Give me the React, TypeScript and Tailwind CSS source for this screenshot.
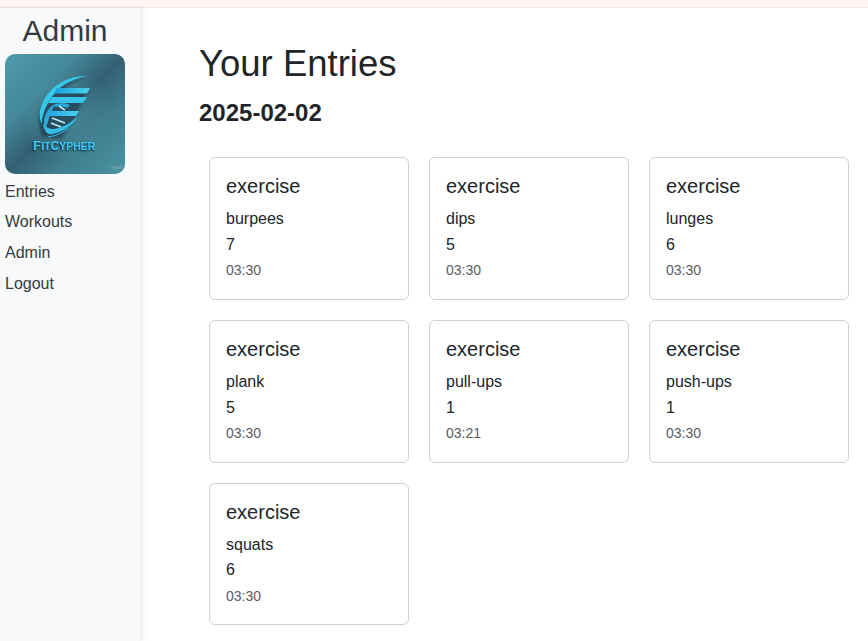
const entries = [
  { name: "burpees", n: 7, t: "03:30" },
  { name: "dips", n: 5, t: "03:30" },
  { name: "lunges", n: 6, t: "03:30" },
  { name: "plank", n: 5, t: "03:30" },
  { name: "pull-ups", n: 1, t: "03:21" },
  { name: "push-ups", n: 1, t: "03:30" },
  { name: "squats", n: 6, t: "03:30" },
];

function Logo() {
  return (
    <div className="relative w-[120px] h-[120px] rounded-[10px] overflow-hidden bg-[linear-gradient(135deg,#4f9ba9_0%,#44889a_30%,#335f73_50%,#3f7d8e_70%,#4a94a3_100%)]">
      <svg viewBox="0 0 120 120" className="absolute inset-0 w-full h-full">
        <defs>
          <filter id="sh" x="-20%" y="-20%" width="140%" height="140%">
            <feGaussianBlur stdDeviation="1.8" />
          </filter>
          <filter id="soft" x="-5%" y="-5%" width="110%" height="110%">
            <feGaussianBlur stdDeviation="0.35" />
          </filter>
          <radialGradient id="glow" cx="50%" cy="50%" r="50%">
            <stop offset="0%" stopColor="#4c93a3" stopOpacity="0.7" />
            <stop offset="100%" stopColor="#4c93a3" stopOpacity="0" />
          </radialGradient>
          <linearGradient id="bar" x1="0" y1="0" x2="1" y2="0">
            <stop offset="0%" stopColor="#1f9ee0" />
            <stop offset="100%" stopColor="#46d3ee" />
          </linearGradient>
        </defs>
        <circle cx="60" cy="60" r="48" fill="url(#glow)" />
        <g filter="url(#sh)" fill="#12283a" opacity="0.55" transform="translate(-2 2)">
          <path d="M82 22 C60 22 40 38 36 58 C35 68 37 76 40 81 L58 83 L72 63 L82 39 L85 34 L60 34 C66 28 74 24 82 22Z" />
        </g>
        <g filter="url(#soft)">
          <path d="M82 22 C60 21 39 36 35 57 C34 62 35 66 36.5 70 C37.5 57 44 43 56 33 C63 28 72 24 82 22Z" fill="#38c8e8" />
          <path d="M52 34 L85 34 L82 39.5 L49 39.5Z" fill="url(#bar)" />
          <path d="M47 43 L82 43 L78 49 L43 49Z" fill="#38c4ea" />
          <path d="M44 57 L74 57 L71 62 L40 62Z" fill="url(#bar)" />
          <path d="M39 75 C38 63 42 54 50 50 C47 56 44 62 43 68 C42 71 41 73 39 75Z" fill="#2aa9da" />
          <path d="M38 70 C40 78 42 81 47 80 C58 78 68 72 73 62 C67 68 58 74 48 75 C44 75 41 73 38 70Z" fill="#35bce4" />
          <path d="M50 50 C56 49 61 49 65 51 L62 54 C58 52 54 52 49 53Z" fill="#2aa9da" />
          <path d="M47 64 L60 69 M46 69 L56 73 M54 52 L60 56" stroke="#b6ebf3" strokeWidth="1.6" />
          <path d="M43 83 C50 82 58 79 64 74" fill="none" stroke="#35bce4" strokeWidth="1" />
        </g>
        <rect x="106" y="112" width="11" height="3" fill="#9bb8c2" opacity="0.3" />
      </svg>
      <div className="absolute left-[28px] top-[85px] whitespace-nowrap font-['Liberation_Sans',sans-serif] font-bold text-[10.5px] leading-[14px] text-[#3cc9ee] [text-shadow:-1px_1px_2px_#0c2030]">
        <span className="text-[13.5px]">F</span>IT<span className="text-[12px]">C</span>YPHER
      </div>
    </div>
  );
}

function Card({ name, n, t }: { name: string; n: number; t: string }) {
  return (
    <div className="h-[142.8px] border border-[#d0d0d0] rounded-[6px] bg-white pl-4 pt-4 flex flex-col">
      <div className="text-[20px] leading-6 text-[#212529]">exercise</div>
      <div className="text-[16px] leading-6 text-[#212529] mt-[9px]">{name}</div>
      <div className="text-[16px] leading-6 text-[#212529] mt-[1.8px]">{n}</div>
      <div className="text-[14px] leading-[21px] text-[#595c5f] mt-[3.4px]">{t}</div>
    </div>
  );
}

export default function App() {
  return (
    <div className="w-[868px] h-[641px] overflow-hidden bg-white font-['Liberation_Sans',sans-serif] flex flex-col">
      <div className="h-[8px] shrink-0 bg-[#fff5f3] border-b border-[#f8e4df]" />
      <div className="flex flex-1 min-h-0">
        <aside className="w-[140px] shrink-0 bg-[#f8f9fa] shadow-[2px_0_5px_rgba(0,0,0,0.1)] pl-[5px] flex flex-col">
          <div className="w-[120px] text-center text-[30px] leading-[36px] mt-[5px] mb-[5px] text-[#343a40]">Admin</div>
          <Logo />
          <nav className="mt-[2px] flex flex-col text-[16px] text-[#343a40]">
            <a className="h-[31px] leading-[31px]">Entries</a>
            <a className="h-[30px] leading-[30px]">Workouts</a>
            <a className="h-[31px] leading-[31px]">Admin</a>
            <a className="h-[31px] leading-[31px]">Logout</a>
          </nav>
        </aside>
        <main className="flex-1 pl-[59px] pt-[32px]">
          <h1 className="text-[36.5px] leading-[48px] text-[#212529]">Your Entries</h1>
          <h2 className="text-[24px] leading-[29px] font-bold text-[#212529] mt-[10px]">2025-02-02</h2>
          <div className="grid grid-cols-[200px_200px_200px] gap-x-[20px] gap-y-[20px] ml-[10px] mt-[30px]">
            {entries.map((e) => (
              <Card key={e.name} {...e} />
            ))}
          </div>
        </main>
      </div>
    </div>
  );
}
